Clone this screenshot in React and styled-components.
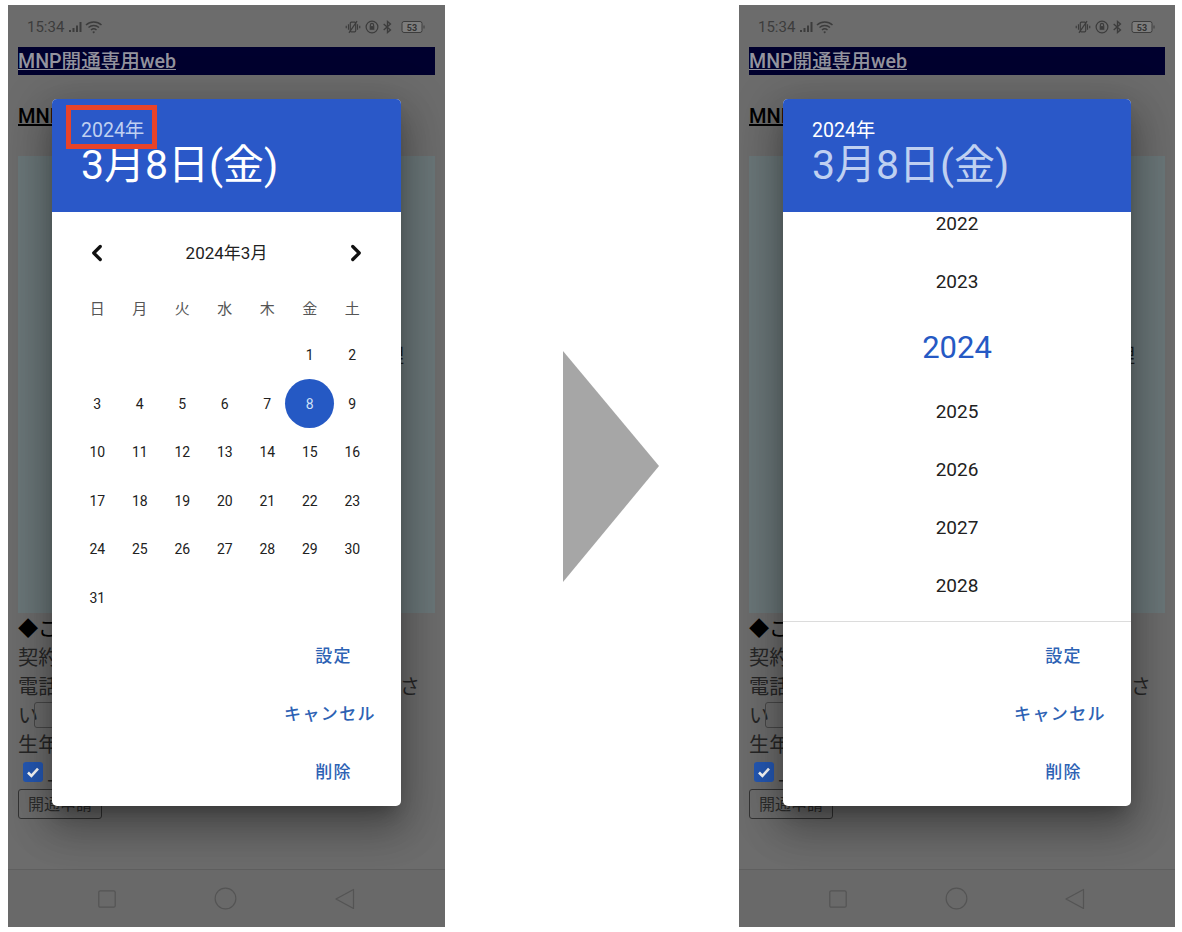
import React from "react"
import styled, { createGlobalStyle } from "styled-components"
import { ChevronLeft, ChevronRight } from "lucide-react"

const GlobalStyle = createGlobalStyle`
  html, body {
    margin: 0;
    padding: 0;
    background: #fff;
  }
  body {
    font-family: Roboto, "Noto Sans CJK JP", sans-serif;
    overflow: hidden;
  }
  * {
    box-sizing: border-box;
  }
`
const Page = styled.div`
  display: flex;
  align-items: flex-start;
  width: 1182px;
  height: 932px;
  padding: 5px 0 0 8px;
`
const Phone = styled.div`
  position: relative;
  display: flex;
  flex-direction: column;
  flex: none;
  width: ${(p) => p.$width}px;
  height: 922px;
  background: #6c6c6c;
  color: #262626;
  overflow: hidden;
`
const ArrowSlot = styled.div`
  flex: none;
  width: 294px;
  height: 922px;
  display: flex;
  align-items: center;
  padding: 0 0 0 118px;
`
const StatusBar = styled.div`
  display: flex;
  align-items: center;
  justify-content: space-between;
  height: 42px;
  padding: 2px 19px 0 19px;
  color: #3c3c3c;
`
const StatusGroup = styled.div`
  display: flex;
  align-items: center;
  gap: 3px;
`
const Time = styled.span`
  font-size: 15px;
  margin-right: 2px;
`
const BatterySvg = styled.svg`
  margin-left: 5px;
`
const TitleBar = styled.div`
  height: 28px;
  margin: 0 10px;
  background: #00002e;
  line-height: 30px;
`
const TitleLink = styled.a`
  font-size: 19.6px;
  font-weight: 500;
  color: #94949e;
  text-decoration: underline;
`
const Heading = styled.div`
  height: 29px;
  margin: 27px 10px 0;
  font-size: 20px;
  font-weight: 500;
  line-height: 29px;
  color: #000;
  text-decoration: underline;
`
const Notice = styled.div`
  height: 457px;
  margin: 25px 10px 0;
  padding: 188px 0 0 346px;
  background: #6a7678;
  font-size: 20px;
  line-height: 24px;
  color: #1c1c1c;
  white-space: nowrap;
  overflow: hidden;
`
const Line = styled.div`
  display: flex;
  align-items: center;
  height: 29px;
  margin: 0 10px;
  padding-top: 4px;
  font-size: 20.2px;
  line-height: 25px;
  white-space: nowrap;
  color: ${(p) => p.$color || "#262626"};
`
const Input = styled.span`
  flex: none;
  display: block;
  width: 170px;
  height: 26px;
  margin: -4px 0 0 -4px;
  border: 1px solid #484848;
  border-radius: 3px;
`
const Check = styled.span`
  flex: none;
  display: flex;
  align-items: center;
  justify-content: center;
  width: 20px;
  height: 20px;
  margin: -6px 4px 0 5px;
  border-radius: 3px;
  background: #2458b4;
`
const SubmitButton = styled.div`
  align-self: flex-start;
  height: 30px;
  margin: 2px 0 0 10px;
  padding: 0 9px;
  border: 1px solid #333;
  border-radius: 3px;
  font-size: 16px;
  line-height: 29px;
  color: #2c2c2c;
`
const NavBar = styled.div`
  display: flex;
  align-items: center;
  justify-content: space-between;
  height: 58px;
  margin-top: auto;
  padding: 0 90px 0 90px;
  border-top: 1px solid #5f5f5f;
  background: #696969;
  color: #545454;
`
const Dialog = styled.div`
  position: absolute;
  top: 94px;
  left: 44px;
  right: 44px;
  height: 707px;
  display: flex;
  flex-direction: column;
  border-radius: 5px;
  background: #fff;
  box-shadow: 0 11px 15px -7px rgba(0, 0, 0, 0.25), 0 24px 38px 3px rgba(0, 0, 0, 0.2),
    0 9px 46px 8px rgba(0, 0, 0, 0.18);
`
const DialogHeader = styled.div`
  position: relative;
  flex: none;
  height: 113px;
  padding: 22px 0 0 29px;
  border-radius: 5px 5px 0 0;
  background: #2a58c8;
`
const HeaderYear = styled.div`
  font-size: 19.5px;
  line-height: 20px;
  color: ${(p) => (p.$dim ? "#bfd0f1" : "#fff")};
`
const HeaderDate = styled.div`
  font-size: 41px;
  line-height: 48px;
  color: ${(p) => (p.$dim ? "#bfd0f1" : "#fff")};
`
const Highlight = styled.div`
  position: absolute;
  top: 6px;
  left: 14px;
  width: 91px;
  height: 44px;
  border: 5px solid #e8432a;
`
const DialogBody = styled.div`
  flex: none;
  height: 409px;
  overflow: hidden;
`
const MonthNav = styled.div`
  display: flex;
  align-items: center;
  justify-content: space-between;
  height: 42px;
  margin-top: 20px;
  padding: 0 32px;
  font-size: 17px;
  color: #212121;
`
const MonthLabel = styled.span`
  margin-bottom: 4px;
`
const WeekRow = styled.div`
  display: grid;
  grid-template-columns: repeat(7, 42.5px);
  height: 30px;
  margin-top: 18px;
  padding-left: 24px;
  align-items: center;
  justify-items: center;
  font-size: 15px;
  color: #555;
`
const DayGrid = styled.div`
  display: grid;
  grid-template-columns: repeat(7, 42.5px);
  grid-auto-rows: 48.5px;
  margin-top: 9px;
  padding-left: 24px;
  align-items: center;
  justify-items: center;
  font-size: 14px;
  color: #212121;
`
const Day = styled.div`
  flex: none;
  display: flex;
  align-items: center;
  justify-content: center;
  width: 49px;
  height: 49px;
  border-radius: 50%;
  background: ${(p) => (p.$selected ? "#2559c4" : "transparent")};
  color: ${(p) => (p.$selected ? "#cfe0f7" : "inherit")};
`
const YearList = styled.div`
  margin-top: -18px;
`
const YearRow = styled.div`
  display: flex;
  align-items: center;
  justify-content: center;
  height: ${(p) => (p.$active ? 72 : 58)}px;
  padding-top: ${(p) => (p.$active ? 2 : 0)}px;
  font-size: ${(p) => (p.$active ? 31 : 19)}px;
  color: ${(p) => (p.$active ? "#2559c4" : "#212121")};
`
const DialogFooter = styled.div`
  flex: 1;
  display: flex;
  flex-direction: column;
  align-items: flex-end;
  padding-top: 3px;
  border-top: 1px solid ${(p) => (p.$divider ? "#dcdcdc" : "transparent")};
`
const Action = styled.div`
  display: flex;
  align-items: center;
  height: 58px;
  margin-right: ${(p) => p.$inset}px;
  font-size: 17px;
  font-weight: 500;
  letter-spacing: 1.4px;
  color: #2d62b4;
`

const weekDays = ["日", "月", "火", "水", "木", "金", "土"]
const years = [2022, 2023, 2024, 2025, 2026, 2027, 2028]

function StatusIcons() {
  return (
    <StatusGroup>
      <svg width="18" height="16" viewBox="0 0 20 16" fill="none" stroke="currentColor" strokeWidth="1.3">
        <rect x="7" y="2.5" width="6" height="11" rx="1.2" />
        <path d="M5 5v6M15 5v6M2.5 6.5v3M17.5 6.5v3M5.5 14.5L14.5 1.5" />
      </svg>
      <svg width="14" height="14" viewBox="0 0 15 15" fill="none" stroke="currentColor" strokeWidth="1.3">
        <circle cx="7.5" cy="7.5" r="6.3" />
        <rect x="5" y="6.5" width="5" height="4" fill="currentColor" stroke="none" />
        <path d="M5.8 6.5V5.4a1.7 1.7 0 0 1 3.4 0v1.1" />
      </svg>
      <svg width="11" height="16" viewBox="0 0 13 16" fill="none" stroke="currentColor" strokeWidth="1.6">
        <path d="M2 4.5l8 7-3.5 3V1.5L10 4.5l-8 7" />
      </svg>
      <BatterySvg width="25" height="14" viewBox="0 0 25 14" fill="none" stroke="currentColor" strokeWidth="1">
        <rect x="1" y="1.5" width="20" height="11" rx="2" fill="#7d7d7d" />
        <path d="M23 5.5v3" />
        <text x="11" y="10.5" fontSize="9" fontWeight="700" textAnchor="middle" fill="#333" stroke="none" fontFamily="Roboto">
          53
        </text>
      </BatterySvg>
    </StatusGroup>
  )
}

function StatusLeft() {
  return (
    <StatusGroup>
      <Time>15:34</Time>
      <svg width="13" height="12" viewBox="0 0 13 12" fill="currentColor">
        <rect x="0" y="9" width="2" height="2" />
        <rect x="3.5" y="7" width="2" height="4" />
        <rect x="7" y="4.5" width="2" height="6.5" />
        <rect x="10.5" y="1" width="2" height="10" />
      </svg>
      <svg width="18" height="14" viewBox="0 0 18 14" fill="none" stroke="currentColor" strokeWidth="1.5">
        <path d="M1 5a11.5 11.5 0 0 1 15.5 0M3.5 7.5a8 8 0 0 1 10.5 0M6 10a4.2 4.2 0 0 1 5.5 0" />
        <path d="M8.7 13.5l-1.3-1.6a2 2 0 0 1 2.6 0z" fill="currentColor" stroke="none" />
      </svg>
    </StatusGroup>
  )
}

function PageBehind() {
  return (
    <>
      <StatusBar>
        <StatusLeft />
        <StatusIcons />
      </StatusBar>
      <TitleBar>
        <TitleLink>MNP開通専用web</TitleLink>
      </TitleBar>
      <Heading>MNP</Heading>
      <Notice>処理</Notice>
      <Line $color="#000">◆ご</Line>
      <Line>契約</Line>
      <Line>電話番号を、ハイフン無しで入力してくださ</Line>
      <Line>
        い<Input />
      </Line>
      <Line>生年</Line>
      <Line>
        <Check>
          <svg width="14" height="14" viewBox="0 0 14 14" fill="none" stroke="#fff" strokeWidth="2.6">
            <path d="M2 7.5l3.4 3.4L12 3.6" />
          </svg>
        </Check>
        上
      </Line>
      <SubmitButton>開通申請</SubmitButton>
      <NavBar>
        <svg width="18" height="18" viewBox="0 0 18 18" fill="none" stroke="currentColor" strokeWidth="1.2">
          <rect x="0.8" y="0.8" width="16.4" height="16.4" rx="1.5" />
        </svg>
        <svg width="23" height="23" viewBox="0 0 24 24" fill="none" stroke="currentColor" strokeWidth="1.2">
          <circle cx="12" cy="12" r="10.8" />
        </svg>
        <svg width="20" height="22" viewBox="0 0 20 22" fill="none" stroke="currentColor" strokeWidth="1.2" strokeLinejoin="round">
          <path d="M18.5 1.5v19L1 11z" />
        </svg>
      </NavBar>
    </>
  )
}

function CalendarView() {
  const blanks = Array.from({ length: 5 })
  const days = Array.from({ length: 31 }, (_, i) => i + 1)
  return (
    <>
      <MonthNav>
        <ChevronLeft size={26} strokeWidth={3} color="#111" />
        <MonthLabel>2024年3月</MonthLabel>
        <ChevronRight size={26} strokeWidth={3} color="#111" />
      </MonthNav>
      <WeekRow>
        {weekDays.map((d) => (
          <span key={d}>{d}</span>
        ))}
      </WeekRow>
      <DayGrid>
        {blanks.map((_, i) => (
          <span key={i} />
        ))}
        {days.map((d) => (
          <Day key={d} $selected={d === 8}>
            {d}
          </Day>
        ))}
      </DayGrid>
    </>
  )
}

function YearView() {
  return (
    <YearList>
      {years.map((y) => (
        <YearRow key={y} $active={y === 2024}>
          {y}
        </YearRow>
      ))}
    </YearList>
  )
}

function DateDialog({ yearMode }) {
  return (
    <Dialog>
      <DialogHeader>
        <HeaderYear $dim={!yearMode}>2024年</HeaderYear>
        <HeaderDate $dim={yearMode}>3月8日(金)</HeaderDate>
        {!yearMode && <Highlight />}
      </DialogHeader>
      <DialogBody>{yearMode ? <YearView /> : <CalendarView />}</DialogBody>
      <DialogFooter $divider={yearMode}>
        <Action $inset={49}>設定</Action>
        <Action $inset={25}>キャンセル</Action>
        <Action $inset={49}>削除</Action>
      </DialogFooter>
    </Dialog>
  )
}

export default function App() {
  return (
    <>
      <GlobalStyle />
      <Page>
        <Phone $width={437}>
          <PageBehind />
          <DateDialog />
        </Phone>
        <ArrowSlot>
          <svg width="96" height="231" viewBox="0 0 96 231">
            <polygon points="0,0 96,115 0,231" fill="#a6a6a6" />
          </svg>
        </ArrowSlot>
        <Phone $width={436}>
          <PageBehind />
          <DateDialog yearMode />
        </Phone>
      </Page>
    </>
  )
}
